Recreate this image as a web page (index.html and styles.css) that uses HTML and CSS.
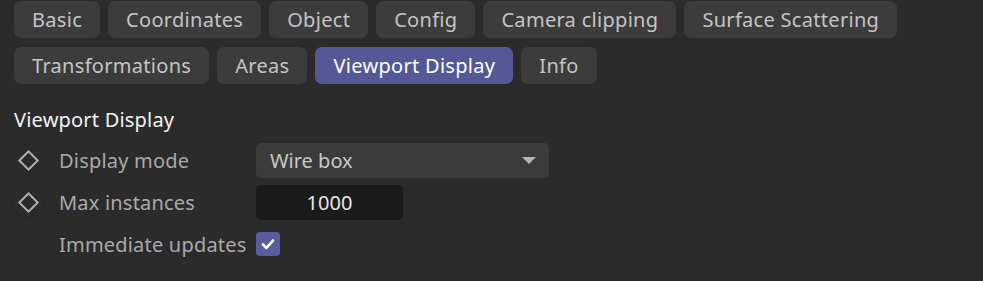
FILE: index.html
```html
<!DOCTYPE html>
<html>

<head>
    <title>Object Properties</title>
    <meta name="viewport" content="width=device-width, initial-scale=1">
    <link rel="stylesheet" href="styles.css">
</head>

<body>
    <nav class="tab-bar">
        <button class="tab">Basic</button>
        <button class="tab">Coordinates</button>
        <button class="tab">Object</button>
        <button class="tab">Config</button>
        <button class="tab">Camera clipping</button>
        <button class="tab">Surface Scattering</button>
        <button class="tab">Transformations</button>
        <button class="tab">Areas</button>
        <button class="tab active">Viewport Display</button>
        <button class="tab">Info</button>
    </nav>

    <section class="group">
        <h3 class="group-title">Viewport Display</h3>

        <div class="prop-row">
            <span class="keyframe"><span class="keyframe-diamond"></span></span>
            <span class="prop-label">Display mode</span>
            <div class="dropdown">
                <span>Wire box</span>
                <span class="dropdown-arrow"></span>
            </div>
        </div>

        <div class="prop-row">
            <span class="keyframe"><span class="keyframe-diamond"></span></span>
            <span class="prop-label">Max instances</span>
            <input type="text" class="num-input" value="1000">
        </div>

        <div class="prop-row">
            <span class="keyframe empty"></span>
            <span class="prop-label">Immediate updates</span>
            <span class="checkbox">
                <svg width="16" height="16" viewBox="0 0 16 16">
                    <path d="M3 8.5 L6.5 12 L13 4.5" fill="none" stroke="#fff" stroke-width="2.6" stroke-linecap="round" stroke-linejoin="round"/>
                </svg>
            </span>
        </div>
    </section>
</body>

</html>
```

FILE: styles.css
```css
body {
    background: #2b2b2b;
    color: #c8c8c8;
    font-family: "Noto Sans", "Open Sans", sans-serif;
    font-size: 20px;
    margin: 0;
    padding: 1px 14px;
}

.tab-bar {
    display: flex;
    flex-wrap: wrap;
    gap: 9px 8px;
    max-width: 920px;
}

.tab {
    background: #3c3c3c;
    color: #c4c4c4;
    border: none;
    height: 37px;
    padding: 0 18px;
    border-radius: 7px;
    font-family: inherit;
    font-size: 20px;
    letter-spacing: 0.3px;
    cursor: pointer;
}

.tab.active {
    background: #555896;
    color: #fff;
}

.group-title {
    color: #f2f2f2;
    font-size: 20px;
    font-weight: normal;
    letter-spacing: 0.2px;
    margin: 22px 0 6px;
}

.prop-row {
    display: flex;
    align-items: center;
    height: 42px;
}

.keyframe {
    width: 30px;
    height: 30px;
    margin-left: -2px;
    border: 1px solid #272727;
    border-radius: 50%;
    display: flex;
    align-items: center;
    justify-content: center;
    flex-shrink: 0;
}

.keyframe.empty {
    border-color: transparent;
}

.keyframe-diamond {
    width: 11px;
    height: 11px;
    border: 2px solid #b0b0b0;
    transform: rotate(45deg);
}

.prop-label {
    color: #a9a9a9;
    width: 197px;
    margin-left: 15px;
    letter-spacing: 0.2px;
    white-space: nowrap;
    flex-shrink: 0;
}

.dropdown {
    width: 293px;
    height: 35px;
    box-sizing: border-box;
    background: #3b3b3b;
    border-radius: 5px;
    padding: 0 13px 0 14px;
    display: flex;
    align-items: center;
    justify-content: space-between;
    color: #c8c8c8;
}

.dropdown-arrow {
    width: 0;
    height: 0;
    border-left: 7px solid transparent;
    border-right: 7px solid transparent;
    border-top: 7px solid #b4b4b4;
}

.num-input {
    width: 147px;
    height: 35px;
    box-sizing: border-box;
    background: #1b1b1b;
    border: none;
    border-radius: 5px;
    color: #e6e6e6;
    font-family: inherit;
    font-size: 20px;
    text-align: center;
    padding: 0;
}

.checkbox {
    width: 24px;
    height: 24px;
    background: #5a5c9f;
    border-radius: 4px;
    display: flex;
    align-items: center;
    justify-content: center;
}
```
